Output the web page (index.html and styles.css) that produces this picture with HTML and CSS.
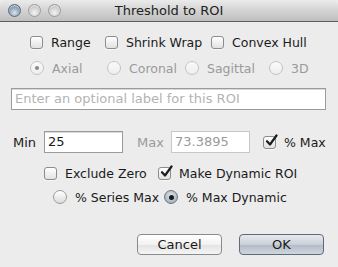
FILE: index.html
```html
<!DOCTYPE html>
<html>
<head>
<meta charset="utf-8">
<link rel="stylesheet" href="styles.css">
</head>
<body>
<div class="window">
  <div class="titlebar">
    <div class="lights">
      <span class="light light-active"></span>
      <span class="light"></span>
      <span class="light"></span>
    </div>
    <div class="title">Threshold to ROI</div>
  </div>
  <div class="content">
    <div class="row row-checks">
      <label class="opt w75"><span class="cb"></span><span>Range</span></label>
      <label class="opt w106"><span class="cb"></span><span>Shrink Wrap</span></label>
      <label class="opt"><span class="cb"></span><span>Convex Hull</span></label>
    </div>
    <div class="row row-radios disabled">
      <label class="opt w77"><span class="rb rb-dot"></span><span>Axial</span></label>
      <label class="opt w78"><span class="rb"></span><span>Coronal</span></label>
      <label class="opt w84"><span class="rb"></span><span>Sagittal</span></label>
      <label class="opt"><span class="rb"></span><span>3D</span></label>
    </div>
    <div class="field-wrap">
      <div class="field label-field"><span class="placeholder">Enter an optional label for this ROI</span></div>
    </div>
    <div class="row row-minmax">
      <span class="lbl">Min</span>
      <div class="field num-field">25</div>
      <span class="lbl lbl-dim">Max</span>
      <div class="field num-field field-dim">73.3895</div>
      <label class="opt"><span class="cb cb-on"><svg viewBox="0 0 14 14" width="14" height="14"><path d="M3 7.2 L6 10.5 L12.5 1.5" fill="none" stroke="#1d1d1d" stroke-width="2.2" stroke-linecap="round" stroke-linejoin="round"/></svg></span><span>% Max</span></label>
    </div>
    <div class="row row-excl">
      <label class="opt w114"><span class="cb"></span><span>Exclude Zero</span></label>
      <label class="opt"><span class="cb cb-on"><svg viewBox="0 0 14 14" width="14" height="14"><path d="M3 7.2 L6 10.5 L12.5 1.5" fill="none" stroke="#1d1d1d" stroke-width="2.2" stroke-linecap="round" stroke-linejoin="round"/></svg></span><span>Make Dynamic ROI</span></label>
    </div>
    <div class="row row-pct">
      <label class="opt w111"><span class="rb"></span><span>% Series Max</span></label>
      <label class="opt"><span class="rb rb-sel"></span><span>% Max Dynamic</span></label>
    </div>
    <div class="buttons">
      <div class="btn">Cancel</div>
      <div class="btn btn-default">OK</div>
    </div>
  </div>
</div>
</body>
</html>
```
FILE: styles.css
```css
* { box-sizing: border-box; }
html, body { margin: 0; padding: 0; }
body {
  width: 338px;
  height: 267px;
  background: #ececec;
  font-family: "DejaVu Sans", "Liberation Sans", sans-serif;
  font-size: 12.5px;
  color: #1a1a1a;
  overflow: hidden;
}
.window { width: 338px; height: 267px; background: #ececec; }
.titlebar {
  height: 22px;
  position: relative;
  background: linear-gradient(#ebebeb, #d3d3d3 50%, #bfbfbf);
  border-bottom: 1px solid #5e5e5e;
  border-radius: 5px 5px 0 0;
  display: flex;
  align-items: center;
}
.lights { display: flex; gap: 7px; padding-left: 8px; }
.light {
  width: 13px; height: 13px; border-radius: 50%;
  background: radial-gradient(circle at 50% 70%, #f4f4f4, #cfcfcf 55%, #a9a9a9);
  border: 1px solid #9c9c9c;
  box-shadow: inset 0 1px 1px rgba(255,255,255,0.7);
}
.light-active {
  background: radial-gradient(circle at 50% 70%, #dbe6ef, #8fa3b6 55%, #5c7186);
  border-color: #56687a;
}
.title {
  position: absolute; left: 0; right: 0; top: 0; height: 22px;
  text-align: center; line-height: 22px;
  font-size: 13px; color: #222;
}
.content { padding-top: 13px; }
.row { display: flex; align-items: center; }
.opt { display: flex; align-items: center; gap: 8px; white-space: nowrap; }
.w75 { width: 75px; }
.w106 { width: 106px; }
.w77 { width: 77px; }
.w78 { width: 78px; }
.w84 { width: 84px; }
.w114 { width: 114px; }
.w111 { width: 111px; }
.row-checks { padding-left: 30px; height: 14px; }
.row-radios { padding-left: 30px; height: 14px; margin-top: 12px; }
.disabled { color: #9a9a9a; }
.cb {
  width: 13px; height: 13px; flex: none;
  border: 1px solid #8c8c8c; border-radius: 3px;
  background: linear-gradient(#ffffff, #f0f0f0 50%, #e2e2e2);
  box-shadow: 0 1px 0 rgba(255,255,255,0.6);
  position: relative;
}
.cb-on svg { position: absolute; left: 0; top: -3px; }
.rb {
  width: 14px; height: 14px; flex: none; border-radius: 50%;
  border: 1px solid #9a9a9a;
  background: linear-gradient(#ffffff, #ededed 50%, #dcdcdc);
  position: relative;
}
.disabled .rb { border-color: #c4c4c4; background: linear-gradient(#fafafa, #eeeeee); }
.rb-dot::after {
  content: ""; position: absolute; left: 4px; top: 4px;
  width: 4px; height: 4px; border-radius: 50%; background: #8a8a8a;
}
.rb-sel {
  border-color: #6d7886;
  background: radial-gradient(circle at 50% 40%, #e4e9ee, #a9b4c1 70%, #8895a4);
}
.rb-sel::after {
  content: ""; position: absolute; left: 3.5px; top: 3.5px;
  width: 5px; height: 5px; border-radius: 50%; background: #1a1a1a;
}
.field-wrap { padding: 13px 12px 0 11px; }
.field {
  background: #fff;
  border: 1px solid #9b9b9b;
  box-shadow: inset 0 1px 0 #d8d8d8;
  height: 22px;
  line-height: 20px;
  padding-left: 3px;
  font-size: 13px;
}
.placeholder { color: #b3b3b3; }
.row-minmax { padding-left: 13px; margin-top: 21px; height: 22px; }
.lbl { width: 31px; font-size: 13px; }
.lbl-dim { color: #9a9a9a; width: 34px; margin-left: 14px; }
.num-field { width: 79px; }
.field-dim { color: #9a9a9a; border-color: #c8c8c8; box-shadow: none; }
.row-minmax .opt { margin-left: 13px; }
.row-excl { padding-left: 44px; margin-top: 13px; height: 14px; }
.row-pct { padding-left: 53px; margin-top: 10px; height: 14px; }
.buttons { display: flex; gap: 17px; padding-left: 137px; margin-top: 30px; }
.btn {
  width: 85px; height: 21px;
  border: 1px solid #8a8a8a; border-radius: 4px;
  background: linear-gradient(#ffffff, #f2f2f2 50%, #e4e4e4 55%, #f5f5f5);
  text-align: center; line-height: 19px; font-size: 13px;
}
.btn-default {
  border-color: #5f6a78;
  background: linear-gradient(#e6eaee, #c9d0d8 50%, #b3bcc7 55%, #cfd6de);
}
```
